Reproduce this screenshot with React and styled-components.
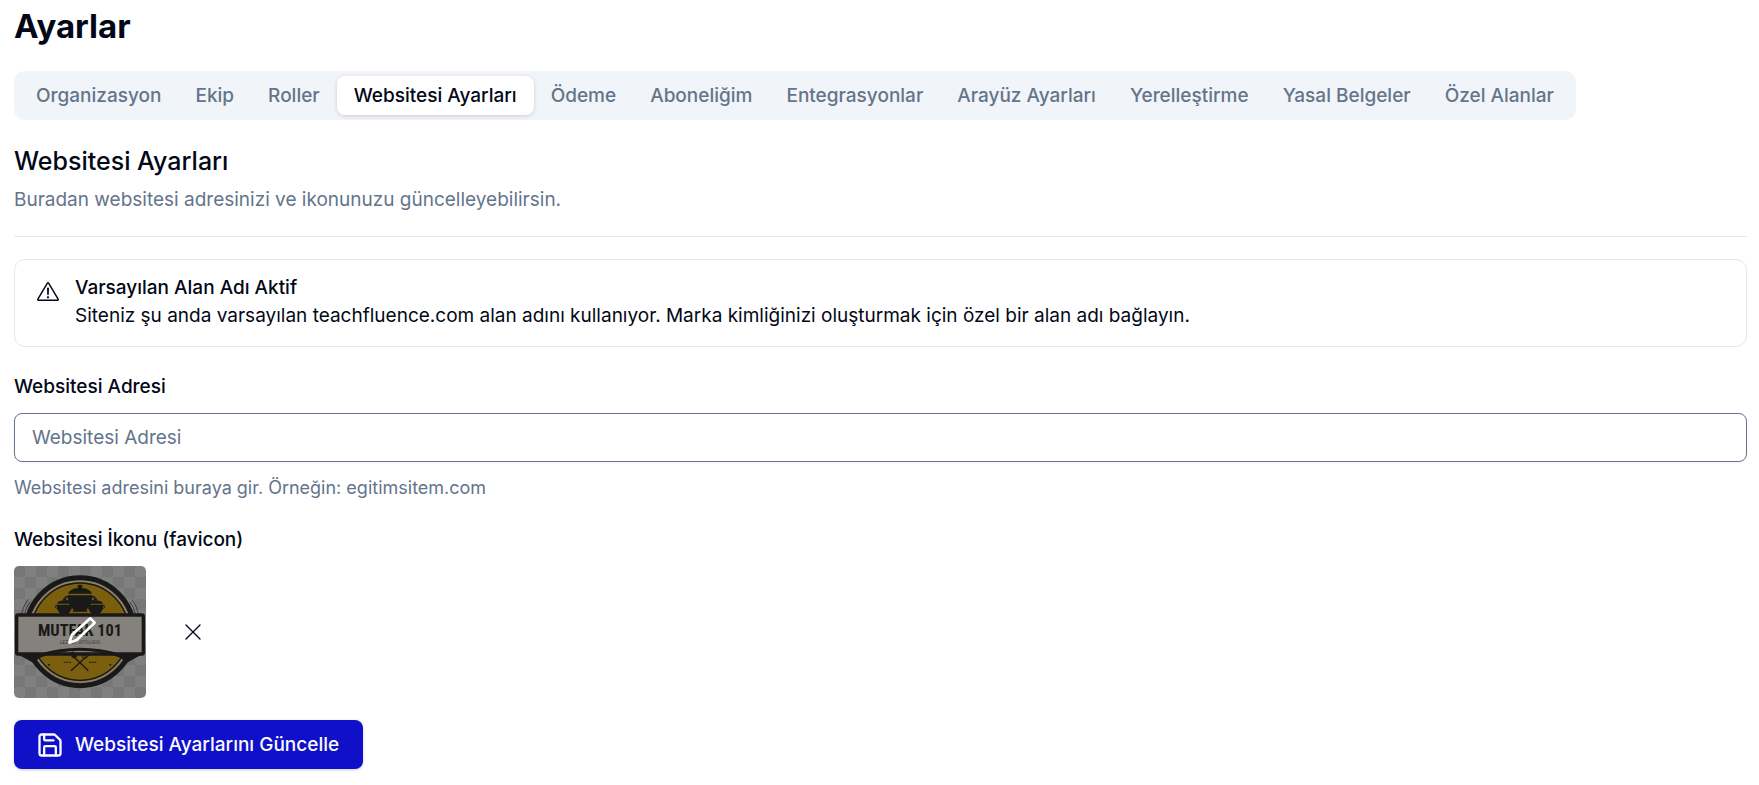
import React, { useState } from 'react';
import styled, { createGlobalStyle } from 'styled-components';
import { Save, X } from 'lucide-react';
import { RxExclamationTriangle } from 'react-icons/rx';

const GlobalStyle = createGlobalStyle`
    * {
        box-sizing: border-box;
    }
    body {
        margin: 0;
        background: #fff;
        color: #020817;
        font-family: Inter, sans-serif;
        font-size: 19px;
        line-height: 28px;
    }
    button, input {
        font: inherit;
    }
`

const Page = styled.main`
    padding: 4px 12px 16px 14px;
`

const PageTitle = styled.h1`
    margin: 0 0 22px;
    font-size: 33px;
    line-height: 45px;
    font-weight: 700;
`

const TabList = styled.div`
    display: inline-flex;
    padding: 5px;
    border-radius: 11px;
    background: #f1f5f9;
`

const Tab = styled.button`
    height: 39px;
    padding: 0 17px;
    border: 0;
    border-radius: 8px;
    font-weight: 500;
    white-space: nowrap;
    cursor: pointer;
    color: ${props => props.$active ? '#020817' : '#64748b'};
    background: ${props => props.$active ? '#fff' : 'transparent'};
    box-shadow: ${props => props.$active ? '0 1px 4px rgba(0, 0, 0, 0.16)' : 'none'};
`

const SectionHeader = styled.header`
    margin-top: 22px;
    padding-bottom: 22px;
    border-bottom: 1px solid #e2e8f0;
`

const SectionTitle = styled.h2`
    margin: 0 0 6px;
    font-size: 25px;
    line-height: 38px;
    font-weight: 500;
`

const Muted = styled.p`
    margin: 0;
    color: #64748b;
`

const Hint = styled(Muted)`
    margin-bottom: 2px;
    font-size: 18px;
`

const Alert = styled.div`
    display: flex;
    gap: 16px;
    margin-top: 22px;
    padding: 14px 22px 16px;
    border: 1px solid #e2e8f0;
    border-radius: 11px;

    svg {
        flex: none;
        margin-top: 8px;
    }
`

const AlertTitle = styled.h5`
    margin: 0;
    font-size: 19px;
    line-height: 28px;
    font-weight: 500;
`

const AlertText = styled.p`
    margin: 0;
`

const Form = styled.form`
    display: flex;
    flex-direction: column;
    align-items: flex-start;
    gap: 22px;
    margin-top: 26px;
`

const Field = styled.div`
    display: flex;
    flex-direction: column;
    gap: 12px;
    width: 100%;
`

const Label = styled.label`
    font-weight: 500;
`

const Input = styled.input`
    width: 100%;
    height: 49px;
    padding: 0 17px;
    border: 1px solid #64748b;
    border-radius: 8px;
    background: #fff;
    box-shadow: 0 1px 3px rgba(0, 0, 0, 0.05);

    &::placeholder {
        color: #64748b;
        opacity: 1;
    }
`

const IconRow = styled.div`
    display: flex;
    align-items: center;
    gap: 33px;
`

const IconPicker = styled.button`
    width: 132px;
    height: 132px;
    padding: 0;
    border: 0;
    border-radius: 5px;
    overflow: hidden;
    cursor: pointer;

    svg {
        display: block;
    }
`

const ClearButton = styled.button`
    display: flex;
    padding: 0;
    border: 0;
    background: none;
    color: #020817;
    cursor: pointer;
`

const SubmitButton = styled.button`
    display: inline-flex;
    align-items: center;
    gap: 11px;
    height: 49px;
    padding: 0 24px 0 22px;
    border: 0;
    border-radius: 8px;
    background: #1010c8;
    color: #f8fafc;
    font-weight: 500;
    box-shadow: 0 1px 3px rgba(0, 0, 0, 0.2);
    cursor: pointer;
`

const tabs = [
    'Organizasyon',
    'Ekip',
    'Roller',
    'Websitesi Ayarları',
    'Ödeme',
    'Aboneliğim',
    'Entegrasyonlar',
    'Arayüz Ayarları',
    'Yerelleştirme',
    'Yasal Belgeler',
    'Özel Alanlar',
];

const Pot = ({ x, y, scale }) => (
    <g transform={`translate(${x} ${y}) scale(${scale})`} fill="#191919">
        <path d="M-8 -38Q0 -43 8 -38L5 -30H-5Z" />
        <path d="M-36 -14C-32 -25 -18 -31 0 -31S32 -25 36 -14Z" />
        <path d="M-38 -9H38L36 -2C35 16 28 26 20 32L22 40H-22L-20 32C-28 26 -35 16 -36 -2Z" />
        <path d="M-34 -4H-44V4L-32 11M34 -4H44V4L32 11" fill="none" stroke="#191919" strokeWidth="4" />
    </g>
)

const Favicon = () => (
    <svg width="132" height="132" viewBox="0 0 396 396" aria-hidden="true">
        <defs>
            <pattern id="checker" width="66" height="66" patternUnits="userSpaceOnUse">
                <rect width="66" height="66" fill="#808080" />
                <path d="M0 0h33v33H0zM33 33h33v33H33z" fill="#777" />
            </pattern>
        </defs>
        <rect width="396" height="396" fill="url(#checker)" />
        <circle cx="198" cy="197" r="162" fill="#7c5f0e" stroke="#191919" strokeWidth="15" />
        <circle cx="198" cy="197" r="151" fill="none" stroke="#85817c" strokeWidth="5" />
        <circle cx="198" cy="197" r="146" fill="none" stroke="#191919" strokeWidth="4" />
        <path d="M23 143Q28 118 42 101M32 143Q37 120 49 108M373 143Q368 118 354 101M364 143Q359 120 347 108" fill="none" stroke="#222" strokeWidth="2" />
        <Pot x={151} y={122} scale={0.62} />
        <Pot x={245} y={122} scale={0.62} />
        <Pot x={198} y={97} scale={1} />
        <path d="M6 262L60 292L76 275Q198 234 320 275L336 292L390 262Z" fill="#191919" />
        <rect x="8" y="147" width="380" height="117" rx="4" fill="#85817c" stroke="#191919" strokeWidth="10" />
        <path d="M75 264Q198 226 321 264L320 275Q198 234 76 275Z" fill="#191919" />
        <text x="198" y="209" textAnchor="middle" fontFamily="'Roboto Condensed', Roboto, sans-serif" fontWeight="700" fontSize="49" fill="#191919">MUTFAK 101</text>
        <text x="198" y="234" textAnchor="middle" fontFamily="'DejaVu Sans', sans-serif" fontSize="14" fill="#3c3a38">LEZZET ATÖLYESİ</text>
        <g stroke="#191919" strokeWidth="4" fill="none">
            <path d="M177 270L223 314M219 270L171 314" />
            <path d="M208 260L204 272Q211 282 219 274L227 265M213 262L210 271M220 262L214 270" strokeWidth="3" />
            <path d="M149 289h22M225 289h22" strokeWidth="3" strokeDasharray="6 2" />
        </g>
        <ellipse cx="179" cy="267" rx="8" ry="11" transform="rotate(-40 179 267)" fill="#191919" />
        <circle cx="105" cy="296" r="3" fill="#191919" />
        <circle cx="289" cy="296" r="3" fill="#191919" />
        <path d="M166 230L174 206L229 157L242 170L188 222Z" fill="none" stroke="#fff" strokeWidth="8" strokeLinejoin="round" />
    </svg>
)

const App = () => {
    const [activeTab, setActiveTab] = useState('Websitesi Ayarları');
    const [address, setAddress] = useState('');

    return (
        <>
            <GlobalStyle />
            <Page>
                <PageTitle>Ayarlar</PageTitle>
                <TabList role="tablist">
                    {tabs.map(tab => (
                        <Tab
                            key={tab}
                            type="button"
                            role="tab"
                            aria-selected={tab === activeTab}
                            $active={tab === activeTab}
                            onClick={() => setActiveTab(tab)}
                        >
                            {tab}
                        </Tab>
                    ))}
                </TabList>
                <SectionHeader>
                    <SectionTitle>Websitesi Ayarları</SectionTitle>
                    <Muted>Buradan websitesi adresinizi ve ikonunuzu güncelleyebilirsin.</Muted>
                </SectionHeader>
                <Alert role="alert">
                    <RxExclamationTriangle size={22} />
                    <div>
                        <AlertTitle>Varsayılan Alan Adı Aktif</AlertTitle>
                        <AlertText>
                            Siteniz şu anda varsayılan teachfluence.com alan adını kullanıyor. Marka kimliğinizi oluşturmak için özel bir alan adı bağlayın.
                        </AlertText>
                    </div>
                </Alert>
                <Form onSubmit={event => event.preventDefault()}>
                    <Field>
                        <Label htmlFor="address">Websitesi Adresi</Label>
                        <Input
                            id="address"
                            type="text"
                            placeholder="Websitesi Adresi"
                            value={address}
                            onChange={event => setAddress(event.target.value)}
                        />
                        <Hint>Websitesi adresini buraya gir. Örneğin: egitimsitem.com</Hint>
                    </Field>
                    <Field>
                        <Label htmlFor="favicon">Websitesi İkonu (favicon)</Label>
                        <IconRow>
                            <IconPicker id="favicon" type="button">
                                <Favicon />
                            </IconPicker>
                            <ClearButton type="button" aria-label="Kaldır">
                                <X size={28} strokeWidth={1.2} />
                            </ClearButton>
                        </IconRow>
                    </Field>
                    <SubmitButton type="submit">
                        <Save size={28} />
                        Websitesi Ayarlarını Güncelle
                    </SubmitButton>
                </Form>
            </Page>
        </>
    )
}

export default App
